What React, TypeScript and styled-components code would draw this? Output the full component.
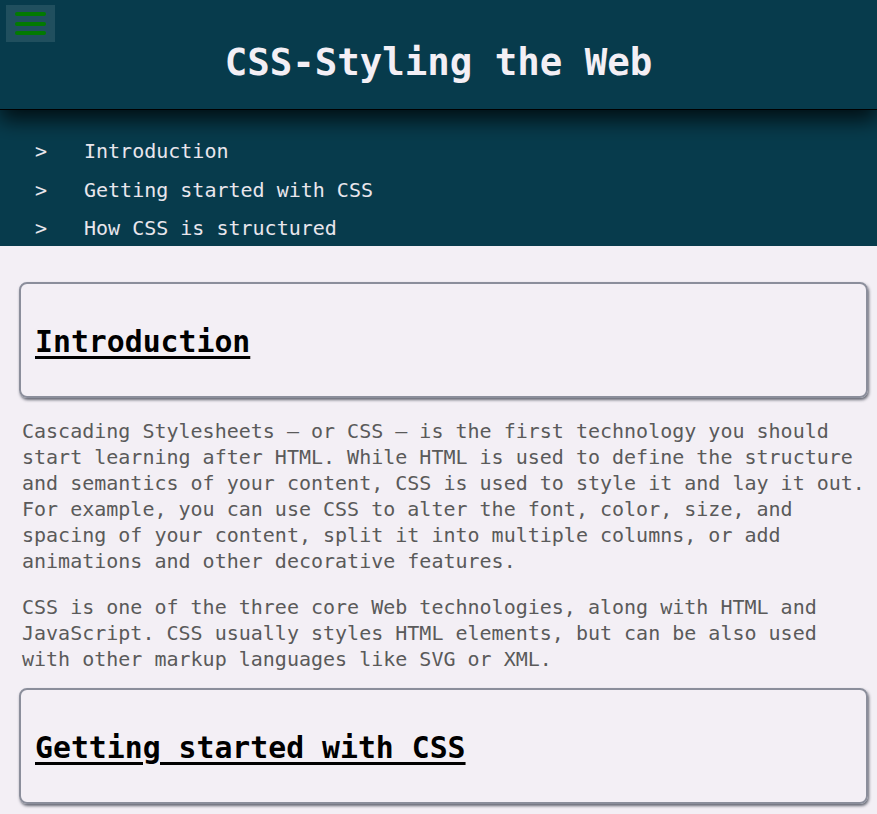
import React from "react";
import styled, { createGlobalStyle } from "styled-components";

const mono = `"DejaVu Sans Mono", "Liberation Mono", monospace`;

const GlobalStyle = createGlobalStyle`
  html, body { margin: 0; padding: 0; }
  body {
    background: #f3eff5;
    font-family: ${mono};
  }
`;

const Header = styled.header`
  position: relative;
  z-index: 2;
  height: 109px;
  background: #073b4c;
  border-bottom: 1px solid #000;
  box-shadow: 0 10px 20px rgba(0, 0, 0, 0.75);
  display: flex;
  align-items: center;
  justify-content: center;
`;

const MenuButton = styled.button`
  position: absolute;
  left: 6px;
  top: 5px;
  width: 49px;
  height: 37px;
  border: none;
  padding: 7px 9px;
  background: rgba(255, 255, 255, 0.1);
  display: flex;
  flex-direction: column;
  justify-content: space-between;
  cursor: pointer;
`;

const Bar = styled.span`
  display: block;
  height: 4px;
  border-radius: 2px;
  background: #027a02;
`;

const Title = styled.h1`
  margin: 0;
  padding-top: 14px;
  font-family: ${mono};
  font-size: 37.4px;
  font-weight: 700;
  color: #f3eff5;
  letter-spacing: 0;
`;

const Nav = styled.nav`
  position: relative;
  z-index: 1;
  height: 136px;
  overflow: hidden;
  background: #073b4c;
`;

const NavList = styled.ul`
  list-style: none;
  margin: 0;
  padding: 30px 0 0 35px;
  display: flex;
  flex-direction: column;
  gap: 15px;
`;

const NavItem = styled.li`
  display: flex;
  font-size: 20px;
  line-height: 23.5px;
  color: #e9e6ec;
`;

const Marker = styled.span`
  width: 49px;
  flex: none;
`;

const Main = styled.main`
  padding: 36px 9px 20px 19px;
`;

const Card = styled.section`
  border: 2px solid #8b8e9b;
  border-radius: 8px;
  box-shadow: 1px 2px 3px rgba(40, 45, 60, 0.7);
  padding: 14px 14px;
`;

const CardTitle = styled.h2`
  margin: 27px 0 23px;
  font-family: ${mono};
  font-size: 29.8px;
  line-height: 34px;
  font-weight: 700;
  color: #000;
  text-decoration: underline;
  text-decoration-thickness: 3px;
  text-underline-offset: 4px;
`;

const Para = styled.p`
  margin: 20px 0;
  padding-left: 3px;
  font-size: 20px;
  line-height: 26px;
  color: #5a5a5a;

  & + & {
    margin-top: 20px;
    margin-bottom: 16px;
  }
`;

const navItems = ["Introduction", "Getting started with CSS", "How CSS is structured"];

export default function App() {
  return (
    <>
      <GlobalStyle />
      <Header>
        <MenuButton aria-label="menu">
          <Bar />
          <Bar />
          <Bar />
        </MenuButton>
        <Title>CSS-Styling the Web</Title>
      </Header>
      <Nav>
        <NavList>
          {navItems.map((t) => (
            <NavItem key={t}>
              <Marker>&gt;</Marker>
              <span>{t}</span>
            </NavItem>
          ))}
        </NavList>
      </Nav>
      <Main>
        <Card>
          <CardTitle>Introduction</CardTitle>
        </Card>
        <Para>
          Cascading Stylesheets — or CSS — is the first technology you should start learning after
          HTML. While HTML is used to define the structure and semantics of your content, CSS is used
          to style it and lay it out. For example, you can use CSS to alter the font, color, size,
          and spacing of your content, split it into multiple columns, or add animations and other
          decorative features.
        </Para>
        <Para>
          CSS is one of the three core Web technologies, along with HTML and JavaScript. CSS usually
          styles HTML elements, but can be also used with other markup languages like SVG or XML.
        </Para>
        <Card>
          <CardTitle>Getting started with CSS</CardTitle>
        </Card>
      </Main>
    </>
  );
}
